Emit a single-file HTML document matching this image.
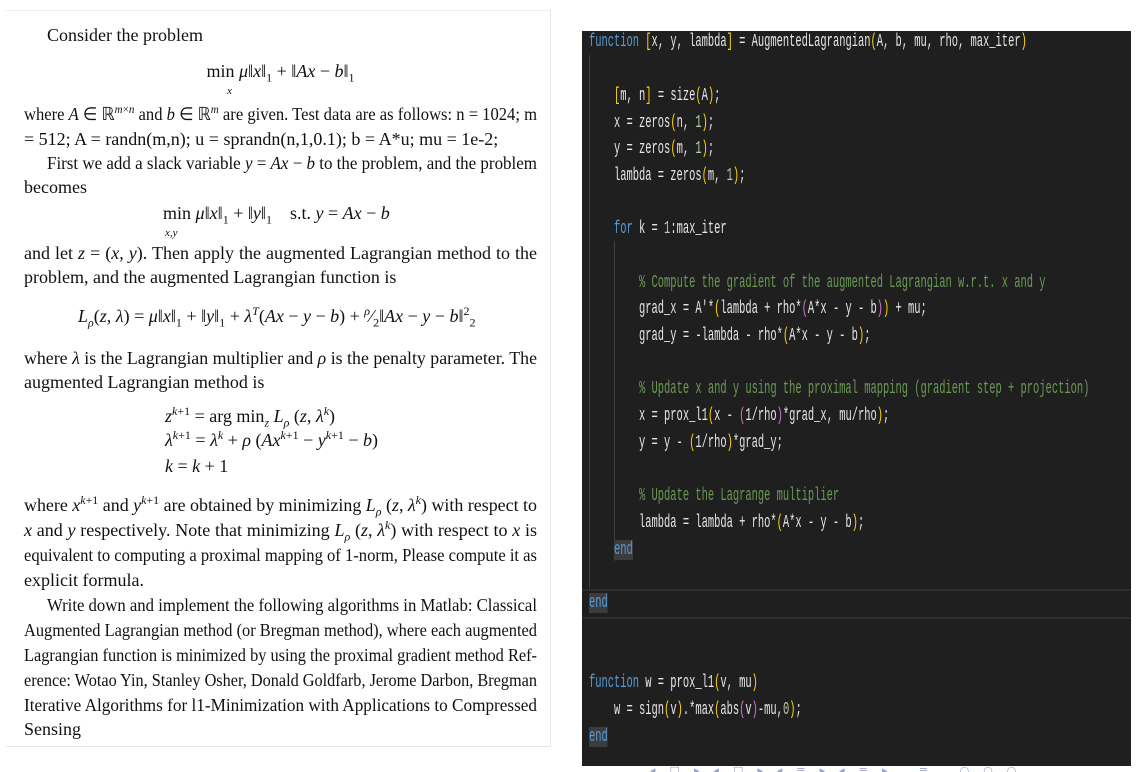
<!DOCTYPE html>
<html><head><meta charset="utf-8"><style>
html,body{margin:0;padding:0;background:#fff;width:1139px;height:772px;overflow:hidden;position:relative}
#left{position:absolute;left:6px;top:10px;width:544px;height:735px;border-top:1px solid #eee;border-right:1px solid #e6e6e6;border-bottom:1px solid #e6e6e6}
.l{position:absolute;left:24px;width:513px;font-family:"Liberation Serif",serif;font-size:18px;color:#111;white-space:nowrap;line-height:22px}
.l span.in{display:inline-block;transform-origin:0 50%}
.c{text-align:center}
i{font-style:italic}
sup,sub{font-size:12px;line-height:0}
#code{position:absolute;left:582px;top:31px;width:549px;height:735px;background:#1f1f1f;overflow:hidden}
.cl{position:absolute;left:7px;font-family:"Liberation Mono",monospace;font-size:18px;color:#e6e6e6;white-space:pre;transform:scaleX(0.579);transform-origin:0 50%;line-height:22px}
.k{color:#569cd6}.y{color:#ffd700}.p{color:#da70d6}.n{color:#b5cea8}.g{color:#6a9955}
.e{background:#3c3c3c}
.guide{position:absolute;width:1px;background:#404040}
</style></head><body>
<div id="left"></div>
<div class="l" style="top:24px;left:47px">Consider the problem</div>
<div class="l c" style="top:60px">min <i>μ</i>‖<i>x</i>‖<sub>1</sub> + ‖<i>Ax</i> − <i>b</i>‖<sub>1</sub></div>
<div class="l c" style="top:80px;font-size:11px;left:-27px"><i>x</i></div>
<div class="l j" style="top:103px">where <i>A</i> ∈ ℝ<sup><i>m</i>×<i>n</i></sup> and <i>b</i> ∈ ℝ<sup><i>m</i></sup> are given. Test data are as follows: n = 1024; m</div>
<div class="l" style="top:128px">= 512; A = randn(m,n); u = sprandn(n,1,0.1); b = A*u; mu = 1e-2;</div>
<div class="l j" style="top:152px;left:47px;width:490px">First we add a slack variable <i>y</i> = <i>Ax</i> − <i>b</i> to the problem, and the problem</div>
<div class="l" style="top:176px">becomes</div>
<div class="l" style="top:202px;left:163px">min <i>μ</i>‖<i>x</i>‖<sub>1</sub> + ‖<i>y</i>‖<sub>1</sub> &nbsp;&nbsp; s.t. <i>y</i> = <i>Ax</i> − <i>b</i></div>
<div class="l" style="top:222px;left:165px;font-size:11px"><i>x,y</i></div>
<div class="l j" style="top:242px">and let <i>z</i> = (<i>x, y</i>). Then apply the augmented Lagrangian method to the</div>
<div class="l" style="top:266px">problem, and the augmented Lagrangian function is</div>
<div class="l" style="top:305px;left:78px"><i>L<sub>ρ</sub></i>(<i>z</i>, <i>λ</i>) = <i>μ</i>‖<i>x</i>‖<sub>1</sub> + ‖<i>y</i>‖<sub>1</sub> + <i>λ<sup>T</sup></i>(<i>Ax</i> − <i>y</i> − <i>b</i>) + <sup><i>ρ</i></sup>⁄<sub>2</sub>‖<i>Ax</i> − <i>y</i> − <i>b</i>‖<sup>2</sup><sub>2</sub></div>
<div class="l j" style="top:347px">where <i>λ</i> is the Lagrangian multiplier and <i>ρ</i> is the penalty parameter. The</div>
<div class="l" style="top:371px">augmented Lagrangian method is</div>
<div class="l" style="top:405px;left:165px"><i>z</i><sup><i>k</i>+1</sup> = arg min<sub><i>z</i></sub> <i>L<sub>ρ</sub></i> (<i>z</i>, <i>λ<sup>k</sup></i>)</div>
<div class="l" style="top:429px;left:165px"><i>λ</i><sup><i>k</i>+1</sup> = <i>λ<sup>k</sup></i> + <i>ρ</i> (<i>Ax</i><sup><i>k</i>+1</sup> − <i>y</i><sup><i>k</i>+1</sup> − <i>b</i>)</div>
<div class="l" style="top:455px;left:165px"><i>k</i> = <i>k</i> + 1</div>
<div class="l j" style="top:494px">where <i>x</i><sup><i>k</i>+1</sup> and <i>y</i><sup><i>k</i>+1</sup> are obtained by minimizing <i>L<sub>ρ</sub></i> (<i>z</i>, <i>λ<sup>k</sup></i>) with respect to</div>
<div class="l j" style="top:519px"><i>x</i> and <i>y</i> respectively. Note that minimizing <i>L<sub>ρ</sub></i> (<i>z</i>, <i>λ<sup>k</sup></i>) with respect to <i>x</i> is</div>
<div class="l j" style="top:544px">equivalent to computing a proximal mapping of 1-norm, Please compute it as</div>
<div class="l" style="top:569px">explicit formula.</div>
<div class="l j" style="top:594px;left:47px;width:490px">Write down and implement the following algorithms in Matlab: Classical</div>
<div class="l j" style="top:619px">Augmented Lagrangian method (or Bregman method), where each augmented</div>
<div class="l j" style="top:644px">Lagrangian function is minimized by using the proximal gradient method Ref-</div>
<div class="l j" style="top:669px">erence: Wotao Yin, Stanley Osher, Donald Goldfarb, Jerome Darbon, Bregman</div>
<div class="l j" style="top:694px">Iterative Algorithms for l1-Minimization with Applications to Compressed</div>
<div class="l" style="top:718px">Sensing</div>

<div id="code">
<div class="guide" style="left:7px;top:24px;height:535px"></div>
<div class="guide" style="left:32px;top:210px;height:320px"></div>
<div style="position:absolute;left:0;top:558px;width:549px;height:26px;border-top:2px solid #2c2c2c;border-bottom:2px solid #2c2c2c"></div>
<div class="cl" style="top:0px"><span class="k">function</span> <span class="y">[</span>x, y, lambda<span class="y">]</span> = AugmentedLagrangian<span class="y">(</span>A, b, mu, rho, max_iter<span class="y">)</span></div>
<div class="cl" style="top:54px">    <span class="y">[</span>m, n<span class="y">]</span> = size<span class="y">(</span>A<span class="y">)</span>;</div>
<div class="cl" style="top:81px">    x = zeros<span class="y">(</span>n, <span class="n">1</span><span class="y">)</span>;</div>
<div class="cl" style="top:107px">    y = zeros<span class="y">(</span>m, <span class="n">1</span><span class="y">)</span>;</div>
<div class="cl" style="top:134px">    lambda = zeros<span class="y">(</span>m, <span class="n">1</span><span class="y">)</span>;</div>
<div class="cl" style="top:187px">    <span class="k">for</span> k = <span class="n">1</span>:max_iter</div>
<div class="cl" style="top:241px">        <span class="g">% Compute the gradient of the augmented Lagrangian w.r.t. x and y</span></div>
<div class="cl" style="top:267px">        grad_x = A'*<span class="y">(</span>lambda + rho*<span class="p">(</span>A*x - y - b<span class="p">)</span><span class="y">)</span> + mu;</div>
<div class="cl" style="top:294px">        grad_y = -lambda - rho*<span class="y">(</span>A*x - y - b<span class="y">)</span>;</div>
<div class="cl" style="top:347px">        <span class="g">% Update x and y using the proximal mapping (gradient step + projection)</span></div>
<div class="cl" style="top:374px">        x = prox_l1<span class="y">(</span>x - <span class="p">(</span>1/rho<span class="p">)</span>*grad_x, mu/rho<span class="y">)</span>;</div>
<div class="cl" style="top:401px">        y = y - <span class="y">(</span>1/rho<span class="y">)</span>*grad_y;</div>
<div class="cl" style="top:454px">        <span class="g">% Update the Lagrange multiplier</span></div>
<div class="cl" style="top:481px">        lambda = lambda + rho*<span class="y">(</span>A*x - y - b<span class="y">)</span>;</div>
<div class="cl" style="top:508px">    <span class="k e">end</span></div>
<div class="cl" style="top:561px"><span class="k e">end</span></div>
<div class="cl" style="top:641px"><span class="k">function</span> w = prox_l1<span class="y">(</span>v, mu<span class="y">)</span></div>
<div class="cl" style="top:668px">    w = sign<span class="y">(</span>v<span class="y">)</span>.*max<span class="y">(</span>abs<span class="p">(</span>v<span class="p">)</span>-mu,<span class="n">0</span><span class="y">)</span>;</div>
<div class="cl" style="top:695px"><span class="k e">end</span></div>
</div>
<div style="position:absolute;left:650px;top:764px;font:11px 'DejaVu Sans',sans-serif;color:#9aa3c8;letter-spacing:14px;white-space:nowrap">◂□▸◂□▸◂≡▸◂≡▸ ≡ ○○○</div>
<script>
document.querySelectorAll('.l').forEach(function(d){
  var W=d.clientWidth;var s=document.createElement('span');s.className='in';
  while(d.firstChild)s.appendChild(d.firstChild);d.appendChild(s);
  var w=s.getBoundingClientRect().width;
  if(d.classList.contains('j')){
    if(w>W){s.style.transform='scaleX('+(W/w)+')';}
    else{var n=(s.textContent.match(/ /g)||[]).length;if(n)s.style.wordSpacing=((W-w)/n)+'px';}
  } else if(w>W){s.style.transform='scaleX('+(W/w)+')';}
});
</script>
</body></html>
